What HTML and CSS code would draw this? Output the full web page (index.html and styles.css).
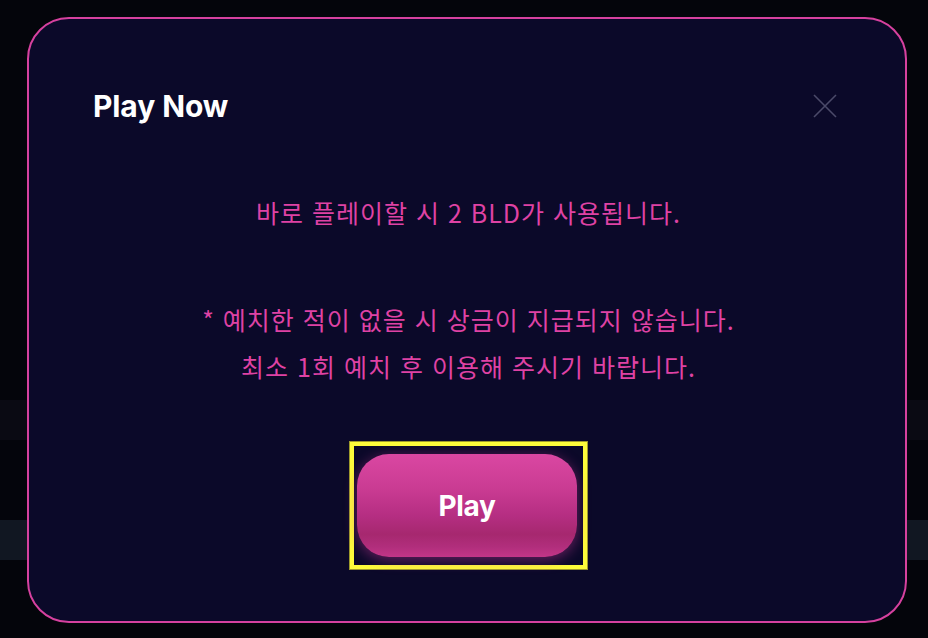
FILE: index.html
```html
<!DOCTYPE html>
<html lang="ko">
<head>
<meta charset="utf-8">
<link rel="stylesheet" href="styles.css">
</head>
<body>
<div class="page">
  <div class="band band-a"></div>
  <div class="band band-b"></div>
  <div class="band band-c"></div>
</div>
<div class="modal">
  <div class="modal-head">
    <h2 class="modal-title">Play Now</h2>
    <button class="close" aria-label="close">
      <svg width="24" height="24" viewBox="0 0 24 24"><path d="M1 1L23 23M23 1L1 23" stroke="#4b4a69" stroke-width="1.6" fill="none"/></svg>
    </button>
  </div>
  <div class="modal-body">
    <p class="msg msg-first">바로 플레이할 시 2 BLD가 사용됩니다.</p>
    <p class="msg msg-second">* 예치한 적이 없을 시 상금이 지급되지 않습니다.<br>최소 1회 예치 후 이용해 주시기 바랍니다.</p>
    <div class="highlight">
      <button class="play">Play</button>
    </div>
  </div>
</div>
</body>
</html>
```
FILE: styles.css
```css
html, body {
  margin: 0;
  padding: 0;
  background: #04050b;
  width: 928px;
  height: 638px;
  overflow: hidden;
}
.page {
  display: flex;
  flex-direction: column;
  padding-top: 400px;
}
.band-a { height: 40px; background: #0a0a13; }
.band-b { height: 80px; background: #04050c; }
.band-c { height: 40px; background: #111722; }

.modal {
  position: absolute;
  left: 27px;
  top: 17px;
  width: 880px;
  height: 606px;
  box-sizing: border-box;
  border: 2px solid #d6419f;
  border-radius: 42px;
  background: #0b0929;
  font-family: Inter, "Noto Sans CJK KR", sans-serif;
}
.modal-head {
  display: flex;
  justify-content: space-between;
  align-items: center;
  padding: 70px 68px 0 64px;
}
.modal-title {
  margin: 0;
  font-size: 30px;
  line-height: 34px;
  font-weight: 700;
  color: #ffffff;
  letter-spacing: -0.1px;
}
.close {
  background: none;
  border: 0;
  padding: 0;
  width: 24px;
  height: 24px;
  display: flex;
}
.modal-body {
  display: flex;
  flex-direction: column;
  align-items: center;
  padding-left: 3px;
}
.msg {
  margin: 0;
  color: #df42a4;
  font-family: "Noto Sans CJK KR", Inter, sans-serif;
  font-size: 25px;
  line-height: 47px;
  letter-spacing: 1px;
  text-align: center;
}
.msg-first { margin-top: 66px; }
.msg-second { margin-top: 60px; }
.highlight {
  margin-top: 52px;
  border: 4px solid #fdfc3a;
  box-shadow: 0 0 0 1px #9e9a2c;
  padding: 8px 6px 8px 3px;
  width: 220px;
  height: 103px;
}
.play {
  width: 220px;
  height: 103px;
  border: 0;
  border-radius: 32px;
  background: linear-gradient(180deg, #da47a2 0%, #c93b92 35%, #b52e82 60%, #a6286f 78%, #b12e7c 90%, #c23688 100%);
  box-shadow: 0 3px 14px rgba(214, 60, 160, 0.45);
  color: #ffffff;
  font-family: Inter, sans-serif;
  font-weight: 700;
  font-size: 28px;
  letter-spacing: -0.3px;
  padding: 0;
}
```
